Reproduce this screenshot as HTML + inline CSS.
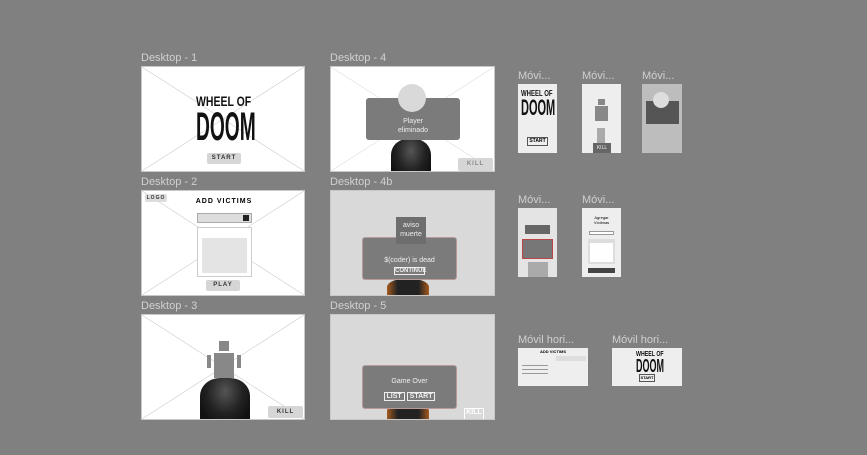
<!DOCTYPE html>
<html><head><meta charset="utf-8"><style>
*{margin:0;padding:0;box-sizing:border-box}
body{width:867px;height:455px;background:#808080;position:relative;overflow:hidden;font-family:"Liberation Sans",sans-serif}
.l{position:absolute;color:#d0d0d0;font-size:11px;line-height:12px;white-space:nowrap}
.f{position:absolute;background:#fff;overflow:hidden;border:1px solid #c8c8c8}
.f svg.x{position:absolute;left:0;top:0;width:100%;height:100%}
.a{position:absolute}
.btn{position:absolute;background:#d6d6d6;border-radius:2px;font-size:6px;letter-spacing:1px;color:#333;text-align:center;font-weight:bold}
.doom{font-family:"Liberation Sans",sans-serif;font-weight:900;color:#111;line-height:1;position:absolute;white-space:nowrap;transform-origin:0 0}
.gun{position:absolute;background:radial-gradient(ellipse at 50% 30%,#555 0%,#222 50%,#111 80%);border-radius:40% 40% 0 0}
.panel{position:absolute;background:#7b7b7b;border:1px solid #b79b9b;border-radius:3px;color:#eee;text-align:center}
</style></head><body>

<div class="l" style="left:141px;top:52px">Desktop - 1</div>
<div class="f" style="left:141px;top:66px;width:164px;height:106px">
<svg class="x" viewBox="0 0 164 106" preserveAspectRatio="none"><path d="M0 0L164 106M164 0L0 106" stroke="#ccc" stroke-width=".6"/></svg>
<div class="doom" style="left:54px;top:27px;font-size:14px;transform:scale(.75,1)">WHEEL OF</div>
<div class="doom" style="left:54px;top:40px;font-size:40px;transform:scale(.48,1)">DOOM</div>
<div class="btn" style="left:65px;top:86px;width:34px;height:11px;line-height:11px">START</div>
</div>

<div class="l" style="left:330px;top:52px">Desktop - 4</div>
<div class="f" style="left:330px;top:66px;width:165px;height:106px">
<svg class="x" viewBox="0 0 165 106" preserveAspectRatio="none"><path d="M0 0L165 106M165 0L0 106" stroke="#ddd" stroke-width=".6"/></svg>
<div class="gun" style="left:60px;top:72px;width:40px;height:40px"></div>
<div class="panel" style="left:35px;top:31px;width:94px;height:42px;border:none;font-size:7px;padding-top:19px;line-height:9px">Player<br>eliminado</div>
<div class="a" style="left:67px;top:17px;width:28px;height:28px;border-radius:50%;background:#d9d9d9"></div>
<div class="btn" style="left:127px;top:91px;width:35px;height:13px;line-height:13px;color:#888">KILL</div>
</div>

<div class="l" style="left:141px;top:176px">Desktop - 2</div>
<div class="f" style="left:141px;top:190px;width:164px;height:106px">
<svg class="x" viewBox="0 0 164 106" preserveAspectRatio="none"><path d="M0 0L164 106M164 0L0 106" stroke="#ccc" stroke-width=".6"/></svg>
<div class="btn" style="left:3px;top:3px;width:22px;height:8px;line-height:8px;font-size:5px;background:#ddd">LOGO</div>
<div class="a" style="left:50px;top:7px;width:64px;font-size:7px;font-weight:bold;letter-spacing:1px;text-align:center">ADD VICTIMS</div>
<div class="a" style="left:55px;top:22px;width:55px;height:10px;background:#ddd;border:1px solid #aaa"><div class="a" style="right:2px;top:1px;width:6px;height:6px;background:#222"></div></div>
<div class="a" style="left:55px;top:36px;width:55px;height:50px;background:#fff;border:1px solid #ccc"><div class="a" style="left:4px;top:10px;width:45px;height:35px;background:#e4e4e4"></div></div>
<div class="btn" style="left:64px;top:89px;width:34px;height:11px;line-height:11px">PLAY</div>
</div>

<div class="l" style="left:330px;top:176px">Desktop - 4b</div>
<div class="f" style="left:330px;top:190px;width:165px;height:106px;background:#d9d9d9">
<div class="gun" style="left:56px;top:88px;width:42px;height:20px;background:linear-gradient(90deg,#a55a20,#222 25%,#222 75%,#a55a20)"></div>
<div class="panel" style="left:31px;top:46px;width:95px;height:43px;font-size:7px;padding-top:19px">$(coder) is dead<div style="margin:3px auto 0;width:31px;border:1px solid #eee;font-size:6px;font-weight:bold">CONTINUE</div></div>
<div class="a" style="left:65px;top:26px;width:30px;height:27px;background:#6e6e6e;color:#eee;font-size:7px;text-align:center;line-height:9px;padding-top:4px">aviso<br>muerte</div>
</div>

<div class="l" style="left:141px;top:300px">Desktop - 3</div>
<div class="f" style="left:141px;top:314px;width:164px;height:106px">
<svg class="x" viewBox="0 0 164 106" preserveAspectRatio="none"><path d="M0 0L164 106M164 0L0 106" stroke="#ccc" stroke-width=".6"/></svg>
<div class="a" style="left:77px;top:26px;width:10px;height:10px;background:#888"></div>
<div class="a" style="left:72px;top:38px;width:20px;height:25px;background:#888"></div>
<div class="a" style="left:65px;top:40px;width:4px;height:13px;background:#888"></div>
<div class="a" style="left:95px;top:40px;width:4px;height:13px;background:#888"></div>
<div class="gun" style="left:58px;top:63px;width:50px;height:45px"></div>
<div class="btn" style="left:126px;top:91px;width:35px;height:12px;line-height:12px">KILL</div>
</div>

<div class="l" style="left:330px;top:300px">Desktop - 5</div>
<div class="f" style="left:330px;top:314px;width:165px;height:106px;background:#d9d9d9">
<div class="gun" style="left:56px;top:88px;width:42px;height:20px;background:linear-gradient(90deg,#a55a20,#222 25%,#222 75%,#a55a20)"></div>
<div class="panel" style="left:31px;top:50px;width:95px;height:44px;font-size:7px;padding-top:12px">Game Over<div style="margin-top:8px;font-size:7px;font-weight:bold"><span style="border:1px solid #eee;padding:0 2px">LIST</span> <span style="border:1px solid #eee;padding:0 2px">START</span></div></div>
<div class="a" style="left:133px;top:93px;width:20px;height:12px;border:1px solid #fff;color:#fff;font-size:7px;font-weight:bold;text-align:center">KILL</div>
</div>

<div class="l" style="left:518px;top:70px">Móvi...</div>
<div class="f" style="left:518px;top:84px;width:39px;height:69px;background:#eee;border:none">
<div class="doom" style="left:3px;top:6px;font-size:8px;transform:scale(.75,1)">WHEEL OF</div>
<div class="doom" style="left:3px;top:13px;font-size:22px;transform:scale(.5,1)">DOOM</div>
<div class="a" style="left:9px;top:53px;width:21px;height:9px;border:1px solid #555;font-size:5px;text-align:center;font-weight:bold">START</div>
</div>
<div class="l" style="left:582px;top:70px">Móvi...</div>
<div class="f" style="left:582px;top:84px;width:39px;height:69px;background:#eee;border:none">
<div class="a" style="left:16px;top:15px;width:7px;height:6px;background:#888"></div>
<div class="a" style="left:13px;top:22px;width:13px;height:15px;background:#888"></div>
<div class="a" style="left:15px;top:44px;width:8px;height:15px;background:#aaa"></div>
<div class="a" style="left:11px;top:59px;width:18px;height:10px;background:#666;color:#eee;font-size:5px;text-align:center;line-height:10px">KILL</div>
</div>
<div class="l" style="left:642px;top:70px">Móvi...</div>
<div class="f" style="left:642px;top:84px;width:40px;height:69px;background:#bdbdbd;border:none">
<div class="a" style="left:4px;top:17px;width:33px;height:23px;background:#555"></div>
<div class="a" style="left:11px;top:8px;width:16px;height:16px;border-radius:50%;background:#ddd"></div>
</div>

<div class="l" style="left:518px;top:194px">Móvi...</div>
<div class="f" style="left:518px;top:208px;width:39px;height:69px;background:#e4e4e4;border:none">
<div class="a" style="left:7px;top:17px;width:25px;height:9px;background:#666"></div>
<div class="a" style="left:4px;top:31px;width:31px;height:20px;background:#777;border:1px solid #b44"></div>
<div class="a" style="left:10px;top:54px;width:20px;height:15px;background:#aaa"></div>
</div>
<div class="l" style="left:582px;top:194px">Móvi...</div>
<div class="f" style="left:582px;top:208px;width:39px;height:69px;background:#eee;border:none">
<div class="a" style="left:6px;top:7px;width:27px;font-size:4px;text-align:center;line-height:5px">Agregar<br>Víctimas</div>
<div class="a" style="left:7px;top:23px;width:25px;height:4px;background:#fff;border:1px solid #999"></div>
<div class="a" style="left:6px;top:31px;width:27px;height:25px;background:#ddd"><div class="a" style="left:2px;top:4px;width:23px;height:19px;background:#fff"></div></div>
<div class="a" style="left:6px;top:60px;width:27px;height:5px;background:#444"></div>
</div>

<div class="l" style="left:518px;top:334px">Móvil hori...</div>
<div class="f" style="left:518px;top:348px;width:70px;height:38px;background:#eee;border:none">
<div class="a" style="left:22px;top:1px;width:26px;font-size:4px;font-weight:bold;text-align:center;white-space:nowrap">ADD VICTIMS</div>
<div class="a" style="left:38px;top:8px;width:30px;height:5px;background:#ddd"></div>
<div class="a" style="left:4px;top:17px;width:26px;height:1px;background:#999"></div>
<div class="a" style="left:4px;top:21px;width:26px;height:1px;background:#999"></div>
<div class="a" style="left:4px;top:25px;width:26px;height:1px;background:#999"></div>
</div>
<div class="l" style="left:612px;top:334px">Móvil hori...</div>
<div class="f" style="left:612px;top:348px;width:70px;height:38px;background:#eee;border:none">
<div class="doom" style="left:24px;top:3px;font-size:7px;transform:scale(.75,1)">WHEEL OF</div>
<div class="doom" style="left:24px;top:9px;font-size:18px;transform:scale(.5,1)">DOOM</div>
<div class="a" style="left:27px;top:26px;width:16px;height:8px;border:1px solid #555;font-size:4px;text-align:center;font-weight:bold">START</div>
</div>
</body></html>
